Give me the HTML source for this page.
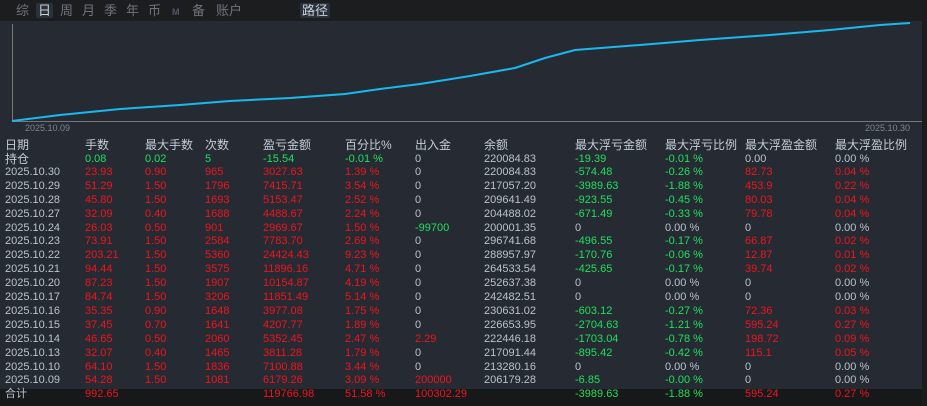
<!DOCTYPE html><html><head><meta charset="utf-8"><style>
body{margin:0;width:927px;height:406px;background:#1b1c1e;overflow:hidden;font-family:"Liberation Sans","Noto Sans CJK SC",sans-serif;}
.wrap{position:absolute;left:0;top:0;width:922px;height:406px;background:#262b33;border-radius:8px 8px 0 0;overflow:hidden}
.top{position:absolute;left:0;top:0;width:922px;height:21px;background:#1c1d1f}
.tab{position:absolute;top:3px;font-size:13px;line-height:15px;color:#6f747a}
.sel{background:#2a313b;color:#c8d0da;border-radius:2px;padding:0 2px}
.t{position:absolute;font-size:11px;line-height:13px;white-space:nowrap;color:#b8c2ce}
.h{font-size:12px;line-height:13px;color:#c3ccd6}
.r{color:#f0141c}.g{color:#1ee05c}
.tot{position:absolute;left:0;top:389px;width:922px;height:17px;background:#17181a}
</style></head><body><div class="wrap">
<div class="top">
<span class="tab" style="left:16px">综</span><span class="tab sel" style="left:36px">日</span><span class="tab" style="left:60px">周</span><span class="tab" style="left:82px">月</span><span class="tab" style="left:104px">季</span><span class="tab" style="left:126px">年</span><span class="tab" style="left:148px">币</span><span class="tab" style="left:172px;font-size:9px;top:5px;color:#556;font-weight:bold">M</span><span class="tab" style="left:192px">备</span><span class="tab" style="left:216px">账户</span><span class="tab sel" style="left:300px">路径</span>
</div>
<svg style="position:absolute;left:0;top:0" width="922" height="135">
<line x1="12.5" y1="24" x2="12.5" y2="122" stroke="#777" stroke-width="1"/>
<line x1="12" y1="121.5" x2="922" y2="121.5" stroke="#777" stroke-width="1"/>
<polyline fill="none" stroke="#19b8f0" stroke-width="2" points="12,121 60,115 120,109 180,105 230,101 290,98 345,94 380,89 420,84 470,76 515,68 545,58 575,50 640,45 700,40 770,35 830,30 880,25 910,23"/>
<text x="25" y="131" font-size="9" fill="#7d8590" font-family="Liberation Sans">2025.10.09</text>
<text x="865" y="131" font-size="9" fill="#7d8590" font-family="Liberation Sans">2025.10.30</text>
</svg>
<div class="tot"></div>
<div id="tb"></div>
</div>
<script>
const X=[5,85,145,205,263,345,415,484,575,665,745,835];
const rows=[
["h","日期","手数","最大手数","次数","盈亏金额","百分比%","出入金","余额","最大浮亏金额","最大浮亏比例","最大浮盈金额","最大浮盈比例"],
["持仓","g0.08","g0.02","g5","g-15.54","g-0.01 %","0","220084.83","g-19.39","g-0.01 %","0.00","0.00 %"],
["2025.10.30","r23.93","r0.90","r965","r3027.63","r1.39 %","0","220084.83","g-574.48","g-0.26 %","r82.73","r0.04 %"],
["2025.10.29","r51.29","r1.50","r1796","r7415.71","r3.54 %","0","217057.20","g-3989.63","g-1.88 %","r453.9","r0.22 %"],
["2025.10.28","r45.80","r1.50","r1693","r5153.47","r2.52 %","0","209641.49","g-923.55","g-0.45 %","r80.03","r0.04 %"],
["2025.10.27","r32.09","r0.40","r1688","r4488.67","r2.24 %","0","204488.02","g-671.49","g-0.33 %","r79.78","r0.04 %"],
["2025.10.24","r26.03","r0.50","r901","r2969.67","r1.50 %","g-99700","200001.35","0","0.00 %","0","0.00 %"],
["2025.10.23","r73.91","r1.50","r2584","r7783.70","r2.69 %","0","296741.68","g-496.55","g-0.17 %","r66.87","r0.02 %"],
["2025.10.22","r203.21","r1.50","r5360","r24424.43","r9.23 %","0","288957.97","g-170.76","g-0.06 %","r12.87","r0.01 %"],
["2025.10.21","r94.44","r1.50","r3575","r11896.16","r4.71 %","0","264533.54","g-425.65","g-0.17 %","r39.74","r0.02 %"],
["2025.10.20","r87.23","r1.50","r1907","r10154.87","r4.19 %","0","252637.38","0","0.00 %","0","0.00 %"],
["2025.10.17","r84.74","r1.50","r3206","r11851.49","r5.14 %","0","242482.51","0","0.00 %","0","0.00 %"],
["2025.10.16","r35.35","r0.90","r1648","r3977.08","r1.75 %","0","230631.02","g-603.12","g-0.27 %","r72.36","r0.03 %"],
["2025.10.15","r37.45","r0.70","r1641","r4207.77","r1.89 %","0","226653.95","g-2704.63","g-1.21 %","r595.24","r0.27 %"],
["2025.10.14","r46.65","r0.50","r2060","r5352.45","r2.47 %","r2.29","222446.18","g-1703.04","g-0.78 %","r198.72","r0.09 %"],
["2025.10.13","r32.07","r0.40","r1465","r3811.28","r1.79 %","0","217091.44","g-895.42","g-0.42 %","r115.1","r0.05 %"],
["2025.10.10","r64.10","r1.50","r1836","r7100.88","r3.44 %","0","213280.16","0","0.00 %","0","0.00 %"],
["2025.10.09","r54.28","r1.50","r1081","r6179.26","r3.09 %","r200000","206179.28","g-6.85","g-0.00 %","0","0.00 %"],
["合计","r992.65","","","r119766.98","r51.58 %","r100302.29","","g-3989.63","g-1.88 %","r595.24","r0.27 %"]];
let h="";
rows.forEach((r,i)=>{let hd=r[0]=="h";let c=hd?r.slice(1):r;
let y=hd?139:(i==1?153:(i==19?391:152+(i-1)*13.9));
c.forEach((v,j)=>{if(!v)return;let cls="t"+(hd||(i==1&&j==0)||(i==19&&j==0)?" h":"");
if(!hd&&j>0&&(v[0]=="r"||v[0]=="g")){cls+=" "+v[0];v=v.slice(1);}
h+=`<div class="${cls}" style="left:${X[j]}px;top:${y}px">${v}</div>`;});});
document.getElementById("tb").innerHTML=h;
</script></body></html>
